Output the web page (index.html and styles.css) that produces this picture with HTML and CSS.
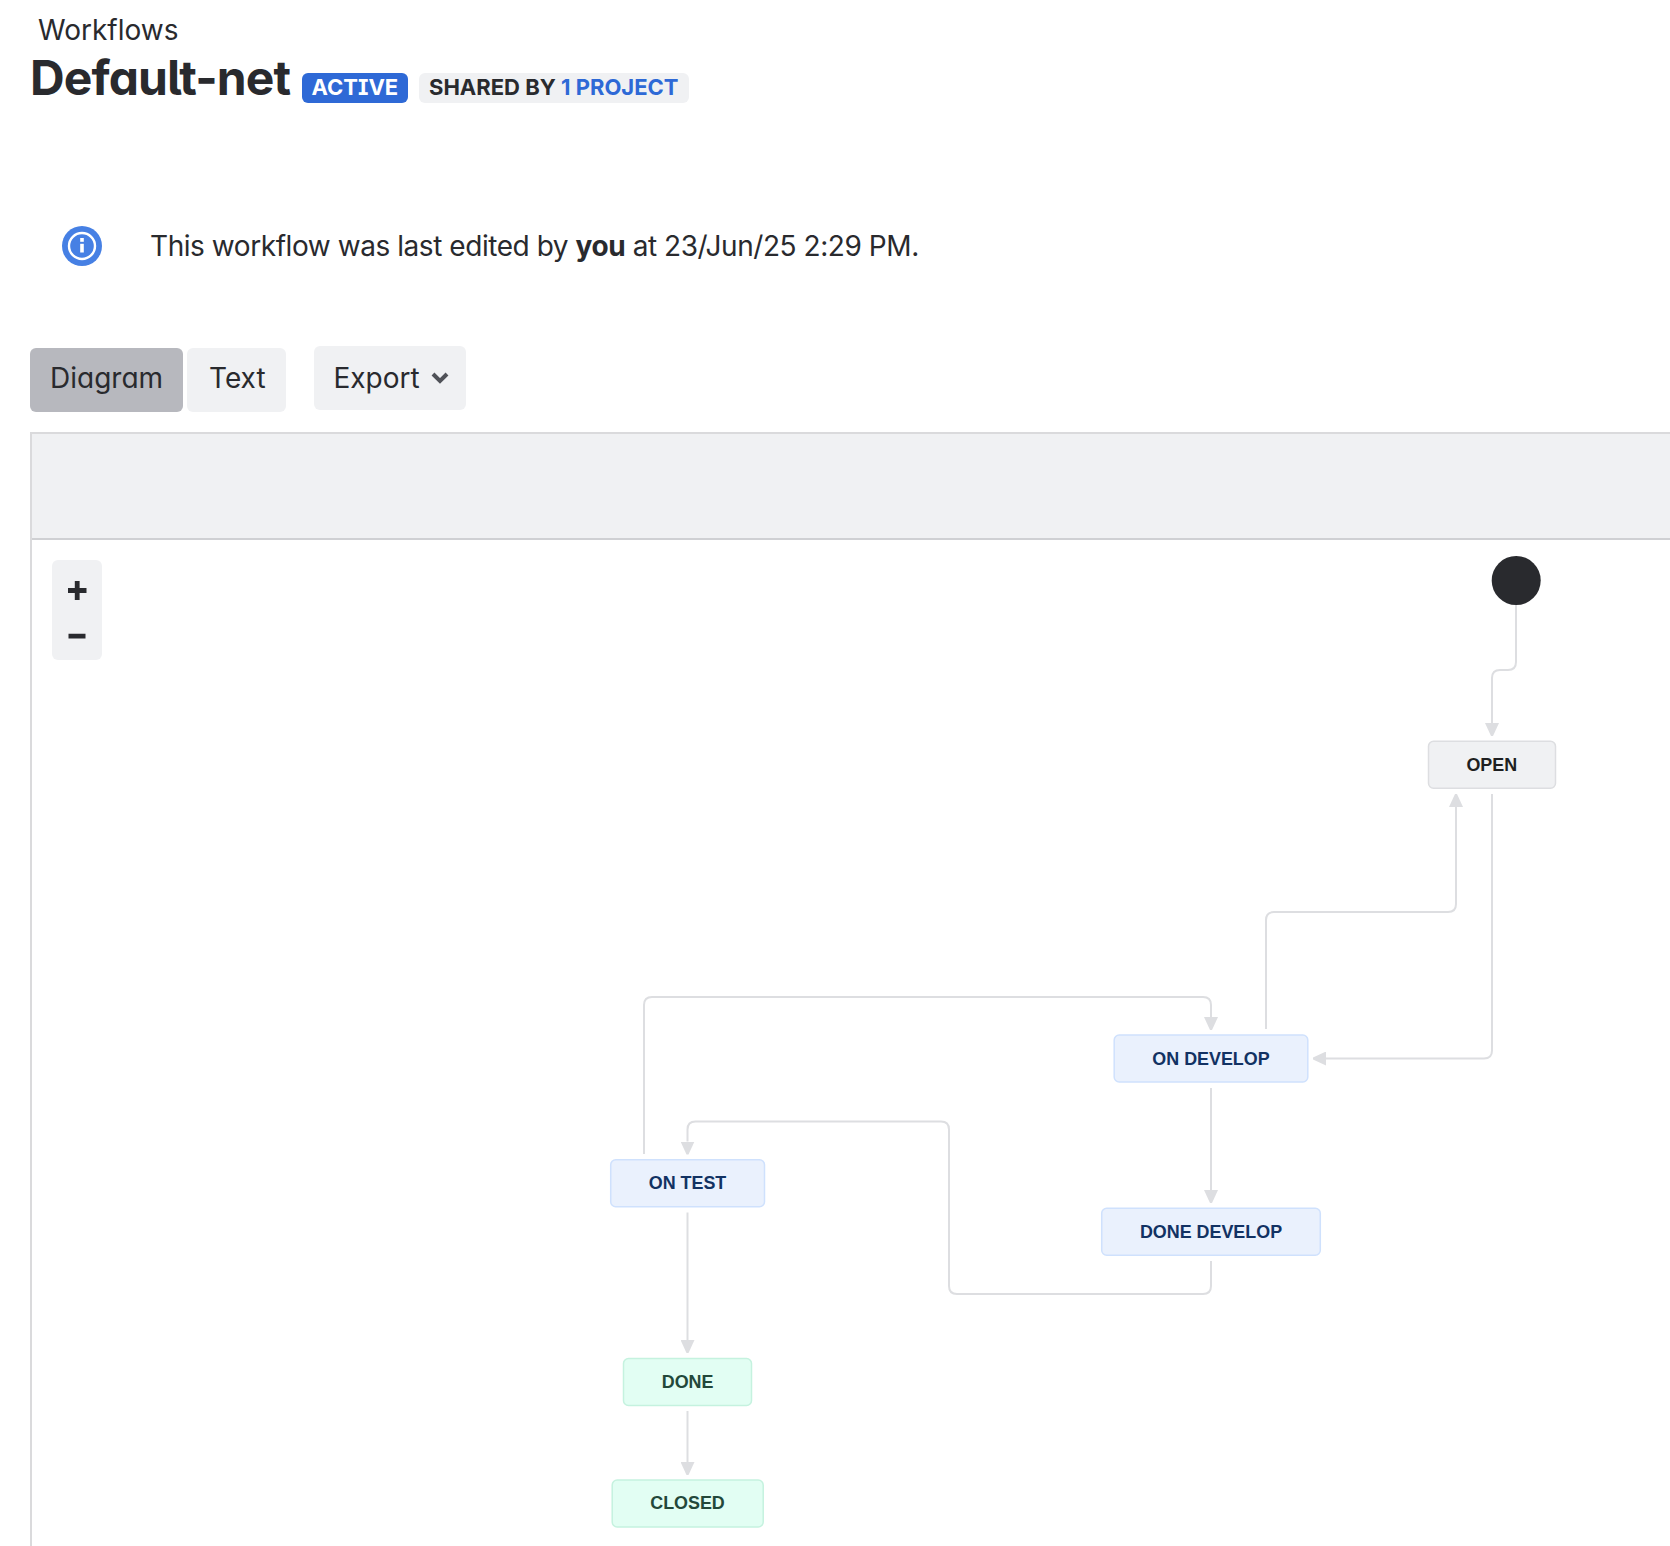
FILE: index.html
```html
<!DOCTYPE html>
<html lang="en">
<head>
<meta charset="utf-8">
<title>Default-net</title>
<link rel="stylesheet" href="styles.css">
</head>
<body>
<main class="page">
  <header class="header">
    <a class="breadcrumb">Workflows</a>
    <div class="title-row">
      <h1 class="title">Default-net</h1>
      <span class="badge badge-active">ACTIVE</span>
      <span class="badge badge-shared"><span class="shared-by">SHARED BY</span><a class="shared-link">1 PROJECT</a></span>
    </div>
  </header>

  <section class="notice">
    <svg class="notice-icon" width="40" height="40" viewBox="0 0 40 40">
      <circle cx="20" cy="20" r="20" fill="#4680e4"/>
      <circle cx="20" cy="20" r="13" fill="none" stroke="#fff" stroke-width="2.4"/>
      <rect x="18.2" y="12" width="3.6" height="3.8" fill="#fff"/>
      <rect x="18.2" y="17.8" width="3.6" height="8.7" fill="#fff"/>
    </svg>
    <p class="notice-text">This workflow was last edited by <strong>you</strong> at 23/Jun/25 2:29 PM.</p>
  </section>

  <nav class="actions">
    <button class="btn btn-diagram">Diagram</button>
    <button class="btn btn-text">Text</button>
    <button class="btn btn-export"><span>Export</span>
      <svg width="18" height="14" viewBox="0 0 18 14"><path d="M2 3 9 10 16 3" fill="none" stroke="#505258" stroke-width="4"/></svg>
    </button>
  </nav>

  <section class="designer">
    <div class="toolbar"></div>
    <div class="canvas">
      <svg class="diagram" width="1638" height="1006" viewBox="32 540 1638 1006">
        <defs>
          <marker id="arrow" markerUnits="userSpaceOnUse" markerWidth="14" markerHeight="14" refX="0" refY="7" orient="auto">
            <path d="M0 0 13 6V8L0 14Z" fill="#dddee1"/>
          </marker>
        </defs>
        <g class="edges">
          <path d="M1516 604V662Q1516 670 1508 670H1500Q1492 670 1492 678V723"/>
          <path d="M1266 1029V920Q1266 912 1274 912H1448Q1456 912 1456 904V807"/>
          <path d="M1492 794V1050.500Q1492 1058.500 1484 1058.500H1326"/>
          <path d="M644 1154V1005Q644 997 652 997H1203Q1211 997 1211 1005V1017"/>
          <path d="M1211 1088V1190"/>
          <path d="M1211 1261V1286Q1211 1294 1203 1294H957Q949 1294 949 1286V1129.500Q949 1121.500 941 1121.500H695.500Q687.500 1121.500 687.500 1129.500V1141.500"/>
          <path d="M687.500 1212.500V1340"/>
          <path d="M687.500 1411V1462"/>
        </g>
        <circle cx="1516.200" cy="580.500" r="24.500" fill="#292a2e"/>
        <g class="node node-todo"><rect x="1428.500" y="741.200" width="127" height="47" rx="5"/><text x="1491.800" y="771">OPEN</text></g>
        <g class="node node-progress"><rect x="1114.200" y="1035" width="193.600" height="47" rx="5"/><text x="1211" y="1065">ON DEVELOP</text></g>
        <g class="node node-progress"><rect x="610.700" y="1159.700" width="153.800" height="47" rx="5"/><text x="687.500" y="1189">ON TEST</text></g>
        <g class="node node-progress"><rect x="1101.700" y="1208.300" width="218.600" height="47" rx="5"/><text x="1211" y="1238">DONE DEVELOP</text></g>
        <g class="node node-done"><rect x="623.500" y="1358.500" width="128" height="47" rx="5"/><text x="687.600" y="1388">DONE</text></g>
        <g class="node node-done"><rect x="612.200" y="1480" width="151" height="47" rx="5"/><text x="687.500" y="1509">CLOSED</text></g>
      </svg>
      <div class="zoom">
        <svg width="50" height="100" viewBox="0 0 50 100"><path d="M16 30.500H34.500M25.200 21V40M16.500 76.200H33.500" fill="none" stroke="#292a2e" stroke-width="4.800"/></svg>
      </div>
    </div>
  </section>
</main>
</body>
</html>
```
FILE: styles.css
```css
* { box-sizing: border-box; }
body { margin: 0; background: #fff; color: #292a2e; font-family: Inter, "Liberation Sans", sans-serif; overflow: hidden; }
.page { height: 1546px; padding-left: 30px; overflow: hidden; }
.header { height: 206px; padding-top: 13px; }
.breadcrumb { display: block; margin-left: 8px; height: 34px; font-size: 28px; line-height: 34px; }
.title-row { display: flex; align-items: flex-start; height: 60px; white-space: nowrap; }
.title { width: 272px; margin: 1px 0 0; font-size: 48px; line-height: 60px; font-weight: 700; letter-spacing: -0.9px; font-feature-settings: "cv11", "cv05"; }
.badge { height: 30px; margin-top: 26px; border-radius: 6px; font-size: 22px; line-height: 28px; font-weight: 700; }
.badge-active { width: 106px; margin-right: 11px; padding-left: 9.500px; background: #2e69d6; color: #fff; font-feature-settings: "cv08"; }
.badge-shared { display: flex; width: 270px; padding-left: 10px; background: #f0f1f3; }
.shared-by { width: 132px; }
.shared-link { color: #2e69d6; }
.notice { display: flex; align-items: center; height: 80px; padding-left: 32px; }
.notice-text { margin: 0 0 0 48px; font-size: 28px; line-height: 40px; letter-spacing: -0.440px; white-space: nowrap; }
.actions { display: flex; height: 146px; padding-top: 60px; }
.btn { display: flex; align-items: center; height: 64px; border: 0; border-radius: 6px; background: #f0f1f3; color: #292a2e; font: 400 28px/40px Inter, sans-serif; font-feature-settings: "cv11"; white-space: nowrap; }
.btn-diagram { width: 153px; margin: 2px 4px 0 0; padding: 0 0 4px 20px; background: #b7b8be; }
.btn-text { width: 99px; margin: 2px 28px 0 0; padding: 0 0 4px 22px; }
.btn-export { width: 152px; padding: 0 17px 0 19.500px; justify-content: space-between; }
.designer { height: 1114px; border-top: 2px solid #dadadc; border-left: 2px solid #dadadc; }
.toolbar { height: 106px; background: #f0f1f3; border-bottom: 2px solid #cfd0d3; }
.canvas { position: relative; height: 1006px; }
.diagram { display: block; }
.zoom { position: absolute; left: 20px; top: 20px; width: 50px; height: 100px; border-radius: 6px; background: #f0f1f3; }
.edges path { fill: none; stroke: #dddee1; stroke-width: 2; marker-end: url(#arrow); }
.node rect { stroke-width: 1.5; }
.node text { font: 700 17.9px "Liberation Sans", sans-serif; text-anchor: middle; }
.node-todo rect { fill: #f0f1f3; stroke: #dddee1; }
.node-todo text { fill: #1e1f21; }
.node-progress rect { fill: #eaf1fd; stroke: #cfe1fd; }
.node-progress text { fill: #123263; }
.node-done rect { fill: #e2fef3; stroke: #c5f2df; }
.node-done text { fill: #23483a; }
```
